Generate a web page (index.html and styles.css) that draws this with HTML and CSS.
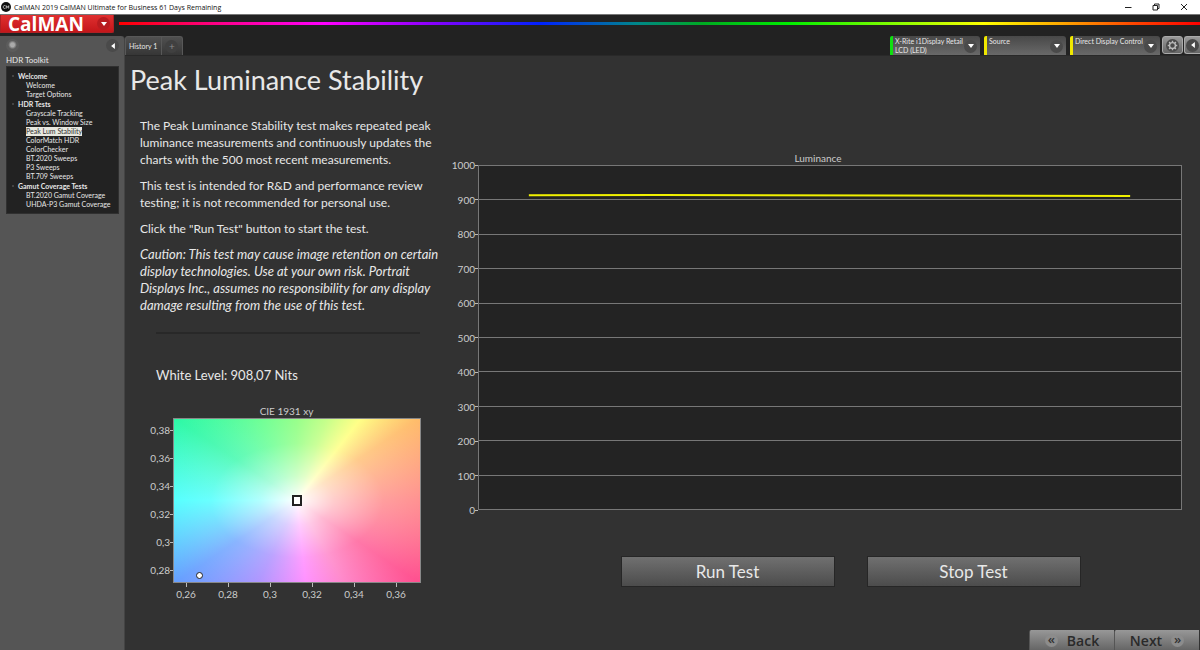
FILE: index.html
```html
<!DOCTYPE html>
<html lang="en">
<head>
<meta charset="utf-8">
<title>CalMAN 2019</title>
<link rel="stylesheet" href="styles.css">
</head>
<body>
<header class="titlebar">
  <svg class="app-icon" viewBox="0 0 10 10"><circle cx="5" cy="5" r="5" fill="#111"/><path d="M4.4 3.7A1.5 1.5 0 1 0 4.4 6.3M5.3 6.5V3.7L6.5 5.4L7.7 3.7V6.5" fill="none" stroke="#ccc" stroke-width=".9"/></svg>
  <span class="window-title">CalMAN 2019 CalMAN Ultimate for Business 61 Days Remaining</span>
  <div class="window-controls">
    <button class="window-button" aria-label="Minimize"><svg viewBox="0 0 8 8"><path d="M1 4.5H7.5" /></svg></button>
    <button class="window-button" aria-label="Restore"><svg viewBox="0 0 8 8"><path d="M1 2.5H5.5V7H1ZM2.5 2.5V1H7V5.5H5.5"/></svg></button>
    <button class="window-button" aria-label="Close"><svg viewBox="0 0 8 8"><path d="M1 1L7 7M7 1L1 7"/></svg></button>
  </div>
</header>
<div class="brandbar">
  <button class="brand">CalMAN <span class="round brand-arrow"><svg viewBox="0 0 6 4"><path d="M0 0H6L3 4Z"/></svg></span></button>
  <div class="spectrum"></div>
</div>
<div class="workspace">
  <aside class="sidebar">
    <div class="sidebar-tools">
      <button class="round pin" aria-label="Pin"></button>
      <button class="round" aria-label="Collapse"><svg class="left" viewBox="0 0 5 8"><path d="M5 0V8L0 4Z"/></svg></button>
    </div>
    <h2 class="sidebar-title">HDR Toolkit</h2>
    <nav class="tree">
      <h3 class="group">Welcome</h3>
      <a class="leaf" href="#">Welcome</a>
      <a class="leaf" href="#">Target Options</a>
      <h3 class="group">HDR Tests</h3>
      <a class="leaf" href="#">Grayscale Tracking</a>
      <a class="leaf" href="#">Peak vs. Window Size</a>
      <a class="leaf selected" href="#">Peak Lum Stability</a>
      <a class="leaf" href="#">ColorMatch HDR</a>
      <a class="leaf" href="#">ColorChecker</a>
      <a class="leaf" href="#">BT.2020 Sweeps</a>
      <a class="leaf" href="#">P3 Sweeps</a>
      <a class="leaf" href="#">BT.709 Sweeps</a>
      <h3 class="group">Gamut Coverage Tests</h3>
      <a class="leaf" href="#">BT.2020 Gamut Coverage</a>
      <a class="leaf" href="#">UHDA-P3 Gamut Coverage</a>
    </nav>
  </aside>
  <div class="document">
    <div class="toolbar">
      <div class="tabs">
        <button class="tab">History 1</button>
        <button class="tab add" aria-label="Add history"><span class="round dim">+</span></button>
      </div>
      <div class="devices">
        <button class="device ready"><span class="device-name">X-Rite i1Display Retail<br>LCD (LED)</span><span class="round"><svg viewBox="0 0 6 4"><path d="M0 0H6L3 4Z"/></svg></span></button>
        <button class="device source"><span class="device-name">Source</span><span class="round"><svg viewBox="0 0 6 4"><path d="M0 0H6L3 4Z"/></svg></span></button>
        <button class="device"><span class="device-name">Direct Display Control</span><span class="round"><svg viewBox="0 0 6 4"><path d="M0 0H6L3 4Z"/></svg></span></button>
        <div class="tools">
        <button class="tool" aria-label="Settings"><span class="round"><svg class="gear" viewBox="0 0 12 12"><circle cx="6" cy="6" r="3.2"/><path d="M6 .8V2.4M6 9.6V11.2M.8 6H2.4M9.6 6H11.2M2.3 2.3L3.5 3.5M8.5 8.5L9.7 9.7M2.3 9.7L3.5 8.5M8.5 3.5L9.7 2.3"/></svg></span></button>
        <button class="tool" aria-label="Hide"><span class="round"><svg class="left" viewBox="0 0 5 8"><path d="M5 0V8L0 4Z"/></svg></span></button>
        </div>
      </div>
    </div>
    <main class="page">
      <h1 class="heading">Peak Luminance Stability</h1>
      <div class="columns">
        <section class="details">
          <div class="intro">
            <p>The Peak Luminance Stability test makes repeated peak<br>luminance measurements and continuously updates the<br>charts with the 500 most recent measurements.</p>
            <p>This test is intended for R&amp;D and performance review<br>testing; it is not recommended for personal use.</p>
            <p>Click the "Run Test" button to start the test.</p>
            <p class="caution">Caution: This test may cause image retention on certain<br>display technologies. Use at your own risk. Portrait<br>Displays Inc., assumes no responsibility for any display<br>damage resulting from the use of this test.</p>
          </div>
          <hr class="divider">
          <p class="level">White Level: 908,07 Nits</p>
          <figure class="cie">
            <figcaption class="chart-title">CIE 1931 xy</figcaption>
            <div class="y-axis"><span>0,38</span><span>0,36</span><span>0,34</span><span>0,32</span><span>0,3</span><span>0,28</span></div>
            <div class="gamut"><i class="target"></i><i class="reading"></i></div>
            <div class="x-axis"><span>0,26</span><span>0,28</span><span>0,3</span><span>0,32</span><span>0,34</span><span>0,36</span></div>
          </figure>
        </section>
        <section class="results">
          <figure class="luminance">
            <figcaption class="chart-title">Luminance</figcaption>
            <div class="y-axis"><span>1000</span><span>900</span><span>800</span><span>700</span><span>600</span><span>500</span><span>400</span><span>300</span><span>200</span><span>100</span><span>0</span></div>
            <div class="plot">
              <i></i><i></i><i></i><i></i><i></i><i></i><i></i><i></i><i></i><i></i>
              <svg class="series" viewBox="0 0 704 345" preserveAspectRatio="none"><path d="M50 30.4L180 30L420 30.5L653 31.2"/></svg>
            </div>
          </figure>
          <div class="actions">
            <button class="action">Run Test</button>
            <button class="action">Stop Test</button>
          </div>
        </section>
      </div>
      <div class="pager">
        <button class="step"><span class="round light">«</span>Back</button>
        <button class="step">Next<span class="round light">»</span></button>
      </div>
    </main>
  </div>
</div>
</body>
</html>
```
FILE: styles.css
```css
* { box-sizing: border-box; }
html, body { height: 100%; }
body { margin: 0; display: flex; flex-direction: column; background: #222; color: #e8e8e8; font-family: Lato, sans-serif; }
button { margin: 0; padding: 0; border: 0; background: none; color: inherit; font: inherit; }
h1, h2, h3, p, figure { margin: 0; font-weight: 400; }
a { color: inherit; text-decoration: none; }
svg { display: block; }

.titlebar { display: flex; align-items: center; height: 14px; background: #fff; color: #111; font: 7px "Open Sans", sans-serif; flex: none; padding: 0 2px 0 1px; }
.app-icon { width: 10px; height: 10px; margin-right: 3px; }
.window-controls { display: flex; margin-left: auto; }
.window-button { width: 28px; display: grid; place-items: center; }
.window-button svg { width: 8px; height: 8px; fill: none; stroke: #222; stroke-width: 1; }

.brandbar { display: flex; height: 22px; flex: none; border-top: 1px solid #777; gap: 5px; }
.brand { display: flex; align-items: center; justify-content: space-between; width: 114px; height: 18px; padding: 0 3px 0 7px; background: linear-gradient(#e03030, #c4161a); border: 1px solid #b02024; border-top: 0; border-radius: 0 0 2px 0; color: #fff; font: 700 19px/18px "Open Sans", sans-serif; }
.spectrum { flex: 1; height: 3px; margin-top: 7px; background: linear-gradient(90deg, #f00, #f08 9%, #f0f 19%, #80f 29%, #02f 39%, #088 48%, #0a2 54%, #0e0 62%, #8f0 72%, #ff0 80%, #fa0 87%, #f40 94%, #f00); }

.round { display: grid; place-items: center; width: 13px; height: 13px; border-radius: 50%; background: #4a4a4a; flex: none; }
.round svg { width: 6px; height: 4px; fill: #fff; }
.round .left { width: 4px; height: 6px; }
.brand-arrow { background: #b81c20; }
.dim { background: #404040; color: #888; font-size: 10px; line-height: 10px; }
.light { background: #8c8c8c; color: #333; font-size: 13px; line-height: 10px; padding-bottom: 3px; }
.pin { background: radial-gradient(circle at 50% 45%, #aaa 0 20%, #5c5c5c 45%); }

.workspace { flex: 1; display: flex; min-height: 0; }
.sidebar { width: 125px; flex: none; padding: 3px 5px 0 6px; background: #555; border-right: 1px solid #444; border-radius: 0 4px 0 0; }
.sidebar-tools { display: flex; justify-content: space-between; }
.sidebar-title { font-size: 8px; line-height: 16px; height: 14px; }
.tree { display: flex; flex-direction: column; align-items: flex-start; padding: 4px 0; background: #222; border: 1px solid #303030; font-size: 7px; line-height: 9px; }
.group { display: flex; align-items: center; height: 10px; font-size: 7px; font-weight: 700; padding-left: 11px; position: relative; }
.group::before { content: ""; position: absolute; left: 5px; top: 4px; border: 1px solid #444; }
.leaf { margin-left: 19px; height: 9px; }
.selected { background: #e8e8e0; color: #333; }

.document { flex: 1; display: flex; flex-direction: column; min-width: 0; }
.toolbar { display: flex; justify-content: space-between; height: 19px; }
.tabs { display: flex; }
.tab { height: 19px; padding: 0 4px 0 3px; background: linear-gradient(#505050, #363636); border: 1px solid #585858; border-bottom: 0; border-radius: 3px 0 0 0; font-size: 7px; }
.add { border-left: 0; border-radius: 0 3px 0 0; }
.devices { display: flex; gap: 4px; }
.device { display: flex; align-items: center; justify-content: space-between; width: 90px; height: 19px; padding: 1px 3px 0 2px; background: linear-gradient(#484848, #696969); border-left: 3px solid #f0e800; border-radius: 2px 3px 0 0; text-align: left; font-size: 7px; line-height: 9px; }
.ready { border-left-color: #10e010; }
.source { width: 82px; }
.device-name { align-self: flex-start; white-space: nowrap; }
.device .round { margin-left: -4px; }
.tools { display: flex; gap: 1px; margin-left: -2px; }
.tool { display: grid; place-items: center; width: 21px; height: 18px; background: linear-gradient(#999, #666); border: 1px solid #aaa; border-radius: 3px; }
.tool:last-child { width: 16px; border-right: 0; border-radius: 3px 0 0 3px; }
.round .gear { width: 11px; height: 11px; fill: none; stroke: #bbb; stroke-width: 1.5; }

.page { flex: 1; display: flex; flex-direction: column; background: #323232; border-top: 1px solid #292929; }
.heading { padding: 5px 0 0 5px; font-size: 27px; line-height: 38px; }
.columns { display: grid; grid-template-columns: 312px 1fr; }
.details { padding: 18px 0 0 15px; }
.intro { font-size: 12px; line-height: 17px; white-space: nowrap; display: flex; flex-direction: column; gap: 9px; }
.caution { font-style: italic; font-size: 13px; }
.divider { width: 264px; height: 2px; margin: 18px 0 0 16px; border: 0; background: #282828; }
.level { margin: 31px 0 0 16px; font-size: 13px; line-height: 20px; }

.chart-title { grid-column: 1 / 3; text-align: center; font-size: 10px; line-height: 14px; color: #ccc; }
.y-axis { display: flex; flex-direction: column; justify-content: space-between; text-align: right; font-size: 10px; color: #ccc; }
.y-axis span { display: flex; align-items: center; justify-content: flex-end; height: 0; }
.y-axis span::after { content: ""; width: 3px; height: 1px; background: #bbb; }
.cie { display: grid; grid-template-columns: 33px 248px; margin-top: 19px; }
.cie .chart-title { padding-left: 12px; }
.cie .y-axis { padding: 12px 0 13px; }
.gamut { position: relative; height: 165px; border: 1px solid #888; background: radial-gradient(ellipse farthest-side at 50% 50%, #fff 0, #ffffffa0 30%, #ffffff48 70%, #ffffff10 140%), conic-gradient(from 0deg at 50% 50%, #80ff70 0deg, #b8ff70 20deg, #ffff70 38deg, #ffb860 56deg, #ff7878 90deg, #ff4488 124deg, #ff70c0 150deg, #ff78ff 174deg, #a080ff 205deg, #5c98ff 236deg, #30ffff 270deg, #20f8a0 304deg, #50ff80 335deg, #80ff70 360deg); }
.target { position: absolute; left: calc(50% - 5px); top: calc(50% - 6px); width: 10px; height: 11px; border: 2px solid #222; background: #fff; }
.reading { position: absolute; left: 22px; bottom: 3px; width: 7px; height: 7px; border: 1px solid #222; border-radius: 50%; background: #fff; }
.x-axis { grid-column: 2; display: flex; justify-content: space-between; padding: 0 25px 0 13px; font-size: 10px; line-height: 14px; color: #ccc; }
.x-axis span { width: 0; display: flex; flex-direction: column; align-items: center; white-space: nowrap; }
.x-axis span::before { content: ""; width: 1px; height: 4px; background: #bbb; }

.results { padding: 52px 18px 0 11px; }
.luminance { display: grid; grid-template-columns: 30px 1fr; }
.luminance .chart-title { padding-left: 6px; }
.plot { position: relative; display: flex; flex-direction: column; height: 345px; background: #232323; border: 1px solid #777; border-top: 0; }
.plot i { flex: 1; border-top: 1px solid #777; }
.series { position: absolute; inset: 0; width: 100%; height: 100%; fill: none; stroke: #f0f000; stroke-width: 2; }
.actions { display: flex; justify-content: center; gap: 32px; padding: 46px 0 0 71px; }
.action { width: 214px; height: 31px; background: linear-gradient(#707070, #4c4c4c); border: 1px solid #262626; font-size: 17px; }
.pager { display: flex; justify-content: flex-end; margin-top: auto; padding-right: 1px; }
.step { display: flex; align-items: center; justify-content: center; gap: 9px; width: 85px; height: 20px; background: linear-gradient(#989898, #666); border-left: 1px solid #555; border-radius: 2px 0 0 0; color: #2a2a2a; font: 600 14px "Open Sans", sans-serif; }
```
